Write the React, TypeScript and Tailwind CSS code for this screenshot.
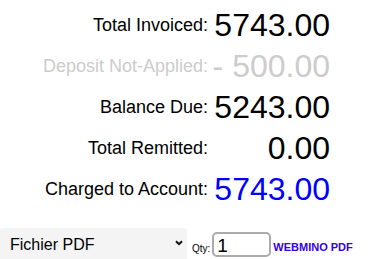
import React from "react";

const rows = [
  { label: "Total Invoiced:", value: "5743.00", lc: "text-black", vc: "text-black" },
  { label: "Deposit Not-Applied:", value: "- 500.00", lc: "text-[#cccccc]", vc: "text-[#cccccc]" },
  { label: "Balance Due:", value: "5243.00", lc: "text-black", vc: "text-black" },
  { label: "Total Remitted:", value: "0.00", lc: "text-black", vc: "text-black" },
  { label: "Charged to Account:", value: "5743.00", lc: "text-black", vc: "text-[#0000ff]" },
];

export default function App() {
  return (
    <div
      className="w-[372px] h-[259px] overflow-hidden bg-white"
      style={{ fontFamily: '"Liberation Sans", Arial, sans-serif' }}
    >
      <div className="pt-[5px] flex flex-col">
        {rows.map((r) => (
          <div key={r.label} className="h-[41px] flex items-center">
            <div className={`w-[208px] text-right text-[18px] leading-[21px] whitespace-nowrap ${r.lc}`}>
              {r.label}
            </div>
            <div className={`ml-[4px] w-[118px] text-right text-[32px] leading-[37px] whitespace-pre ${r.vc}`}>
              {r.value}
            </div>
          </div>
        ))}
      </div>
      <div className="mt-[18px] flex items-start">
        <div className="relative w-[187px] h-[33px] bg-[#f4f4f4] rounded-[3px] shrink-0">
          <select
            className="appearance-none w-full h-full bg-transparent pl-[10px] text-[16px] leading-[18px] text-black outline-none"
            style={{ fontFamily: '"Liberation Sans", Arial, sans-serif' }}
            defaultValue="pdf"
          >
            <option value="pdf">Fichier PDF</option>
          </select>
          <svg
            className="absolute left-[175px] top-[12px] pointer-events-none"
            width="8"
            height="6"
            viewBox="0 0 8 6"
          >
            <path d="M1 1.2 L4 4.2 L7 1.2" fill="none" stroke="#111" strokeWidth="2" />
          </svg>
        </div>
        <span className="ml-[5px] mt-[15px] text-[10px] leading-[12px] text-black">Qty:</span>
        <input
          className="ml-[2px] mt-[4px] w-[59px] h-[25px] border-2 border-[#ababab] rounded-[5px] pl-[3px] pt-[2px] text-[19px] leading-[20px] text-black outline-none"
          style={{ fontFamily: '"Liberation Sans", Arial, sans-serif' }}
          defaultValue="1"
        />
        <span className="ml-[2px] mt-[13px] text-[11px] leading-[13px] font-bold text-[#3300ee] whitespace-nowrap">
          WEBMINO PDF
        </span>
      </div>
    </div>
  );
}
